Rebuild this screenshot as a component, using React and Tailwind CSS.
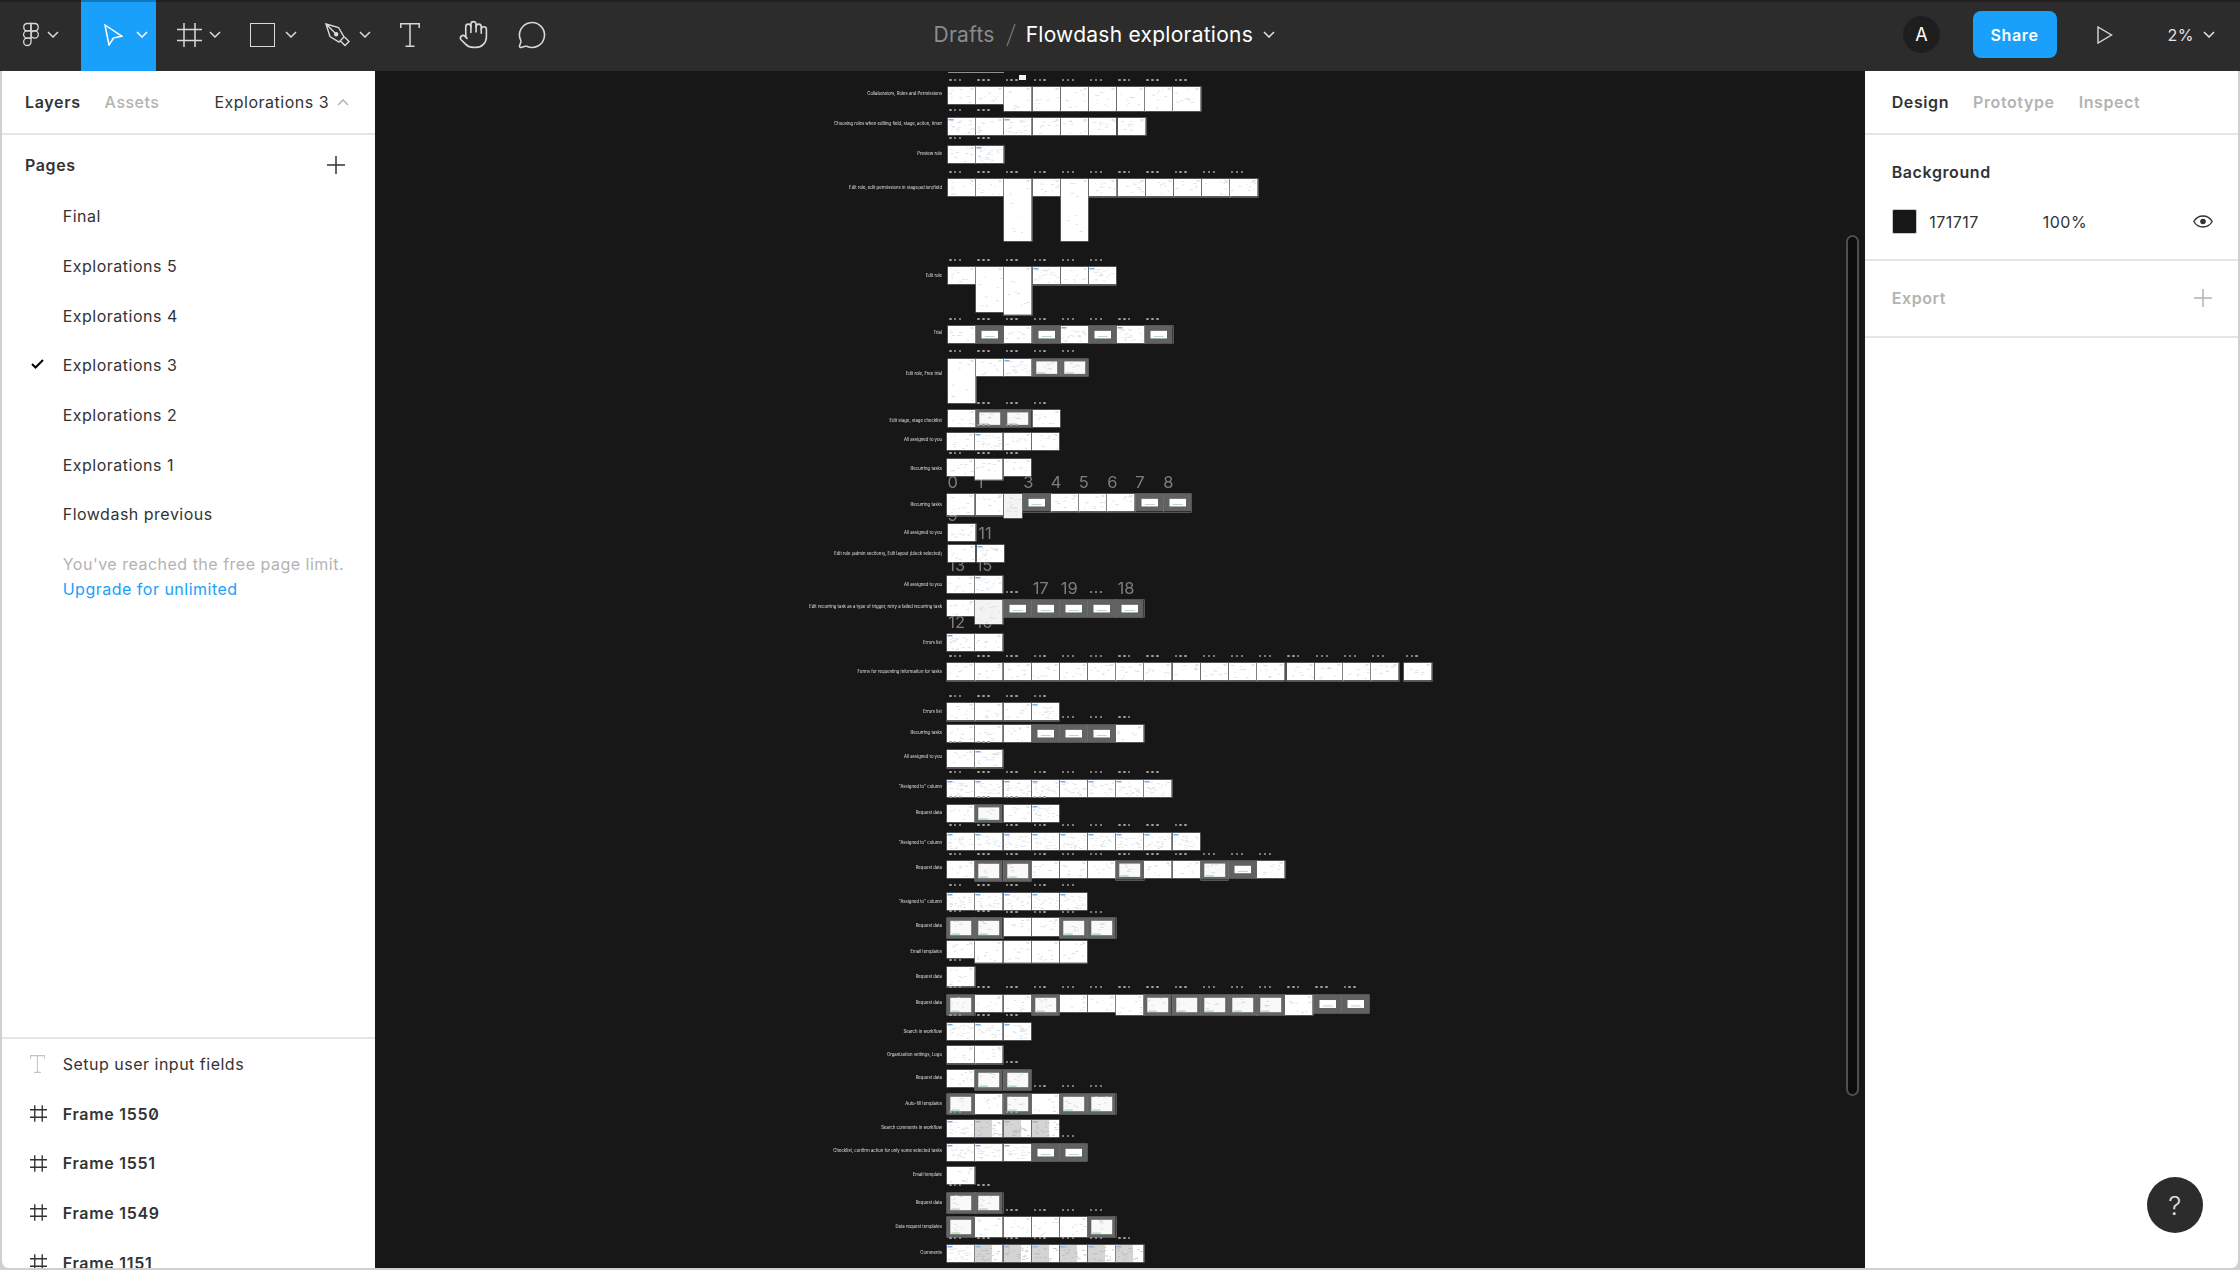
import React from 'react';
import { Hand, MessageCircle } from 'lucide-react';

const OX = 375;
const OY = 71;
const col = (i, dx = 0) => 948 + 28.17 * i + dx;
const range = (a, b) => Array.from({ length: b - a + 1 }, (_, i) => a + i);

// canvas rows, all numbers are page coordinates
const rows = [
  { y: 71.5, f: 'ss', h: 1.5 },
  { y: 87.3, ly: 93.7, label: 'Collaborators, Roles and Permissions', f: 'wwwwwwwww', hs: [17, 17, 24, 24, 24, 24, 24, 24, 24] },
  { y: 118, ly: 124, label: 'Choosing roles when editing field, stage, action, timer', f: 'dwdwwww', xs: [948, 976, 1004, 1032.5, 1060.7, 1088.7, 1118] },
  { y: 145.7, ly: 154.3, label: 'Preview role', f: 'wd' },
  { y: 179.3, ly: 188, label: 'Edit role, edit permissions in stage/action/field', f: 'wwwwwwwwwww', hs: [17, 17, 62, 17, 62], xs: [948, 976, 1004.3, 1032.7, 1060.7, 1089.3, 1117.7, 1145.7, 1173.7, 1202, 1230.3] },
  { y: 267.3, ly: 276, label: 'Edit role', f: 'wwwdwd', hs: [17, 45, 47.7] },
  { y: 326, ly: 332.7, label: 'Trial', f: 'wgwgdgdg' },
  { y: 358.7, ly: 373.7, label: 'Edit role, Free trial', f: 'wwdGG', hs: [44.7] },
  { y: 410, ly: 421, label: 'Edit stage, stage checklist', f: 'wGGw' },
  { y: 432.7, ly: 439.7, label: 'All assigned to you', f: 'wdww', dx: -0.7 },
  { y: 459.3, ly: 468.7, label: 'Recurring tasks', f: 'www', hs: [17, 20.7, 17], dx: -0.7 },
  { y: 494.3, ly: 505, label: 'Recurring tasks', f: 'wwlgwwwgg', w2: 18, hs: [21.3, 21.3, 24], xs: [947.3, 975.7, 1003.7, 1023, 1051, 1079, 1107.3, 1135.7, 1163.7] },
  { y: 524, ly: 532.7, label: 'All assigned to you', f: 'w' },
  { y: 544.7, ly: 553.7, label: 'Edit role (admin sections), Edit layout (block selected)', f: 'wd', xs: [947.7, 976.7] },
  { y: 576, ly: 584.7, label: 'All assigned to you', f: 'wd', dx: -0.7 },
  { y: 599.7, ly: 607, label: 'Edit recurring task as a type of trigger, retry a failed recurring task', f: 'wlggggg', hs: [16.7, 24], dx: -0.7 },
  { y: 634, ly: 642.7, label: 'Errors list', f: 'dw', dx: -0.7 },
  { y: 663.3, ly: 672, label: 'Forms for requesting information for tasks', f: 'wwwwwwwwwwwwwwwww', xs: [...range(0, 11).map((i) => col(i, -0.7)), 1286.7, 1315, 1343, 1371.3, 1404.3] },
  { y: 703.3, ly: 711.7, label: 'Errors list', f: 'wwwd', dx: -0.7 },
  { y: 725, ly: 733.3, label: 'Recurring tasks', f: 'wwwgggw', dx: -0.7 },
  { y: 750.3, ly: 757.3, label: 'All assigned to you', f: 'wd', dx: -0.7 },
  { y: 779.7, ly: 787.3, label: '"Assigned to" column', f: 'dddddddd', dx: -0.7 },
  { y: 804.7, ly: 812.7, label: 'Request data', f: 'wGwd', dx: -0.7 },
  { y: 832.7, ly: 842.7, label: '"Assigned to" column', f: 'ddddddddd', dx: -0.7 },
  { y: 861, ly: 867.7, label: 'Request data', f: 'wGGwwwGwwGgw', hs: [17, 20, 20, 17, 17, 17, 18.5, 17, 17, 18.5, 17, 17], dx: -0.7 },
  { y: 893, ly: 902, label: '"Assigned to" column', f: 'ddddd', dx: -0.7 },
  { y: 918, ly: 925.7, label: 'Request data', f: 'GGwwGG', hs: [20, 20, 18.3, 18.3, 20, 20], dx: -0.7 },
  { y: 941, ly: 951.7, label: 'Email templates', f: 'wwwww', hs: [17, 21.7, 21.7, 21.7, 21.7], dx: -0.7 },
  { y: 967.3, ly: 977.3, label: 'Request data', f: 'w', h: 19.3, dx: -0.7 },
  { y: 994.7, ly: 1003.3, label: 'Request data', f: 'GwwGwwwGGGGGwgg', hs: [20, 17, 17, 20, 17, 17, 20, 20, 20, 20, 20, 20, 20, 18, 18], dx: -0.7 },
  { y: 1023, ly: 1031.7, label: 'Search in workflow', f: 'ddd', dx: -0.7 },
  { y: 1046.3, ly: 1055, label: 'Organization settings, Logo', f: 'ww', dx: -0.7 },
  { y: 1069.5, ly: 1078.3, label: 'Request data', f: 'wGG', hs: [17, 20, 20], dx: -0.7 },
  { y: 1093.7, ly: 1103.7, label: 'Auto-fill templates', f: 'GwGwGG', h: 20, dx: -0.7 },
  { y: 1120, ly: 1128.3, label: 'Search comments in workflow', f: 'dppp', dx: -0.7 },
  { y: 1143.7, ly: 1151.3, label: 'Checklist, confirm action for only some selected tasks', f: 'dddgg', dx: -0.7 },
  { y: 1166.7, ly: 1175, label: 'Email template', f: 'w', dx: -0.7 },
  { y: 1193.3, ly: 1203.3, label: 'Request data', f: 'GG', h: 20, dx: -0.7 },
  { y: 1217.3, ly: 1227.3, label: 'Data request templates', f: 'GwwwwG', h: 20, dx: -0.7 },
  { y: 1245, ly: 1253.3, label: 'Comments', f: 'dpppppp', dx: -0.7 },
];

// y, column indexes
const dotRows = [
  [80, range(0, 8)], [110.3, [0, 1]], [138.3, [0, 1]], [172, range(0, 10)], [259.7, range(0, 5)],
  [318.7, range(0, 7)], [351.3, range(0, 4)], [402.7, [1, 2, 3]], [425.3, [1, 2]], [452.7, [0, 1, 2]],
  [592.3, [2, 5]], [655.7, range(0, 11)], [696, range(0, 3)], [717, [4, 5, 6]], [742.3, [0, 1]], [772.3, range(0, 7)],
  [796.7, range(0, 3)], [825, range(0, 8)], [853.7, range(0, 11)], [885.3, range(0, 4)], [910.7, [0, 1]],
  [912, [2, 3, 4, 5]], [960, [0]], [987.3, range(0, 14)], [1015.3, [0, 1, 2]], [1062, [2]], [1086, [3, 4, 5]],
  [1112.3, [0, 2]], [1135.7, [4]], [1185.3, [0, 1]], [1209.7, [2, 3, 4, 5]], [1237.7, range(0, 6)],
];

const digits = [
  ['0', 952.7, 482], ['1', 980, 482], ['3', 1028.3, 482], ['4', 1056, 482], ['5', 1083.7, 482], ['6', 1112.3, 482],
  ['7', 1140, 482], ['8', 1168.3, 482], ['9', 952.7, 515], ['11', 985, 532.7], ['13', 956.7, 565], ['15', 984, 565],
  ['17', 1040.7, 587.7], ['19', 1069.3, 587.7], ['18', 1126, 587.7], ['12', 956.7, 622.3], ['16', 984, 622.3],
];

const pages = ['Final', 'Explorations 5', 'Explorations 4', 'Explorations 3', 'Explorations 2', 'Explorations 1', 'Flowdash previous'];

function rnd(seed) {
  let s = seed * 9301 + 49297;
  return () => {
    s = (s * 9301 + 49297) % 233280;
    return s / 233280;
  };
}

function Marks({ w, h, n, seed, color, x0 = 1, x1 }) {
  const r = rnd(seed);
  const right = x1 ?? w;
  return range(1, n).map((i) => (
    <rect key={i} x={x0 + r() * (right - x0 - 3)} y={2 + r() * (h - 4)} width={1 + r() * 2.5} height={0.6} fill={color} />
  ));
}

function Thumb({ kind, w, h, seed }) {
  if (kind === 's') return null;
  return (
    <svg width={w} height={h} className="block">
      {kind === 'w' && <>
        <rect width={w} height={h} fill="#fff" />
        <Marks w={w} h={h} n={8} seed={seed} color="#cdcdcd" />
        <rect x={w - 5} y={1.5} width={3} height={1} fill="#b8d4b8" />
      </>}
      {kind === 'l' && <>
        <rect width={w} height={h} fill="#f3f3f3" />
        <Marks w={w} h={h} n={16} seed={seed} color="#d0d0d0" />
      </>}
      {kind === 'd' && <>
        <rect width={w} height={h} fill="#fff" />
        <rect x={0.5} y={1} width={5} height={1.5} fill="#79ace8" />
        <Marks w={w} h={h} n={24} seed={seed} color="#d0d8e0" />
      </>}
      {kind === 'p' && <>
        <rect width={w} height={h} fill="#fff" />
        <rect width={w * 0.62} height={h} fill="#d4d4d4" />
        <rect x={0.5} y={1} width={5} height={1.5} fill="#8fb6e4" />
        <Marks w={w} h={h} n={20} seed={seed} color="#b0b0b0" />
      </>}
      {kind === 'g' && <>
        <rect width={w} height={h} fill="#616161" />
        <rect x={w * 0.2} y={h * 0.28} width={w * 0.6} height={h * 0.44} fill="#fff" />
        <rect x={w * 0.32} y={h * 0.58} width={w * 0.36} height={1} fill="#b8d8c0" />
      </>}
      {kind === 'G' && <>
        <rect width={w} height={h} fill="#646464" />
        <rect x={w * 0.12} y={h * 0.14} width={w * 0.76} height={h * 0.72} fill="#f9f9f9" />
        <Marks w={w - 6} h={h - 5} n={5} seed={seed} color="#c8c8c8" x0={4} />
        <rect x={w * 0.16} y={h * 0.78} width={w * 0.3} height={1} fill="#8fcf9f" />
      </>}
    </svg>
  );
}

function Dots({ x, y }) {
  return (
    <div className="absolute flex gap-[2.5px]" style={{ left: x - OX, top: y - 1.2 - OY }}>
      <i className="size-[2.4px] rounded-full bg-[#9c9c9c]" />
      <i className="size-[2.4px] rounded-full bg-[#9c9c9c]" />
      <i className="size-[2.4px] rounded-full bg-[#9c9c9c]" />
    </div>
  );
}

function Canvas() {
  return (
    <div className="absolute inset-0 blur-[0.4px]">
      {digits.map(([t, x, y], i) => (
        <span key={i} className="absolute -translate-x-1/2 -translate-y-1/2 text-[16.5px] leading-none text-[#7d7d7d]" style={{ left: x - OX, top: y - OY }}>{t}</span>
      ))}
      {rows.map((row, ri) => (
        <React.Fragment key={ri}>
          {row.label && (
            <span className="absolute -translate-x-full -translate-y-1/2 whitespace-nowrap text-[4.25px] leading-none text-[#e0e0e0]" style={{ left: 942 - OX, top: row.ly - OY }}>{row.label}</span>
          )}
          {row.f.split('').map((kind, i) => {
            const x = row.xs ? (row.xs[i] ?? col(i)) : col(i, row.dx || 0);
            const h = row.hs?.[i] ?? row.h ?? 17.3;
            const w = row.w2 && i === 2 ? row.w2 : 27.5;
            return (
              <div key={i} className={kind === 's' ? 'absolute bg-[#8f8f8f]' : 'absolute overflow-hidden shadow-[0_0_0_0.6px_#7d7d7d]'} style={{ left: x - OX, top: row.y - OY, width: w, height: h }}>
                <Thumb kind={kind} w={w} h={h} seed={ri * 31 + i * 7 + 1} />
              </div>
            );
          })}
        </React.Fragment>
      ))}
      <div className="absolute left-[644px] top-[4px] h-[5px] w-[7px] bg-[#eef4ee]" />
      {dotRows.map(([y, cols], ri) => cols.map((c) => <Dots key={`${ri}-${c}`} x={col(c) + 1.2} y={y} />))}
      {[1287.3, 1316, 1344, 1372, 1405.7].map((x) => <Dots key={x} x={x} y={655.7} />)}
    </div>
  );
}

const Chevron = ({ up, className = 'text-[#d6d6d6]' }) => (
  <svg width="12" height="7" viewBox="0 0 12 7" fill="none" stroke="currentColor" strokeWidth="1.5" className={className}>
    <path d={up ? 'M1 6l5-5 5 5' : 'M1 1l5 5 5-5'} />
  </svg>
);

const FrameIcon = ({ w = 25, h = 24, strokeWidth = 1.5 }) => (
  <svg width={w} height={h} viewBox="0 0 25 24" fill="none" stroke="currentColor" strokeWidth={strokeWidth}>
    <path d="M7 0v24M18 0v24M0 6.5h25M0 17.5h25" />
  </svg>
);

const TextIcon = ({ w = 20, h = 24 }) => (
  <svg width={w} height={h} viewBox="0 0 20 24" fill="none" stroke="currentColor" strokeWidth="1.5">
    <path d="M.8 5V.8h18.4V5M10 .8v22.4M5.5 23.2h9" />
  </svg>
);

const Plus = ({ className }) => (
  <svg width="18" height="18" viewBox="0 0 18 18" fill="none" stroke="currentColor" strokeWidth="1.5" className={className}>
    <path d="M9 0v18M0 9h18" />
  </svg>
);

function Toolbar() {
  return (
    <header className="relative flex h-[71px] shrink-0 bg-[#2c2c2c] text-[#d9d9d9]">
      <div className="flex h-full w-[81px] shrink-0 items-center pb-[2px] pl-[22px]">
        <svg width="18" height="25" viewBox="0 0 18 24" fill="none" stroke="currentColor" strokeWidth="1.3">
          <path d="M9 1H5.25a3.67 3.67 0 0 0 0 7.33H9z" />
          <path d="M9 1h3.75a3.67 3.67 0 0 1 0 7.33H9z" />
          <path d="M9 8.33H5.25a3.67 3.67 0 0 0 0 7.34H9z" />
          <circle cx="12.67" cy="12" r="3.67" />
          <path d="M9 15.67H5.25A3.67 3.67 0 1 0 9 19.33z" />
        </svg>
        <Chevron className="ml-[7px]" />
      </div>
      <div className="flex h-full w-[75px] shrink-0 items-center bg-[#18a0fb] pb-[2px] pl-[23px] text-white">
        <svg width="19" height="22" viewBox="0 0 19 22" fill="none" stroke="currentColor" strokeWidth="1.5">
          <path d="M1 1l17 11.3-8.5 1.7L5 21z" />
        </svg>
        <Chevron className="ml-[13px] text-white" />
      </div>
      <div className="flex h-full w-[77px] shrink-0 items-center pb-[2px] pl-[21px]">
        <FrameIcon />
        <Chevron className="ml-[7px]" />
      </div>
      <div className="flex h-full w-[73px] shrink-0 items-center pb-[2px] pl-[17px]">
        <div className="h-[24px] w-[25px] border-[1.5px] border-[#d9d9d9]" />
        <Chevron className="ml-[10px]" />
      </div>
      <div className="flex h-full w-[79px] shrink-0 items-center pb-[2px] pl-[19px]">
        <svg width="25" height="24" viewBox="0 0 25 24" fill="none" stroke="currentColor" strokeWidth="1.4">
          <path d="M1 1l12.5 3.5L19 14l-5 5-9-5.5zM1 1l9.3 9.3" />
          <circle cx="11.2" cy="11.2" r="1.5" fill="currentColor" />
          <path d="M15.5 18l4.5 4.5 4-4-4.5-4.5" />
        </svg>
        <Chevron className="ml-[9px]" />
      </div>
      <div className="flex h-full w-[56px] shrink-0 items-center pb-[2px] pl-[15px]"><TextIcon /></div>
      <div className="flex h-full w-[62px] shrink-0 items-center pb-[2px] pl-[17px]"><Hand size={31} strokeWidth={1.25} /></div>
      <div className="flex h-full w-[71px] shrink-0 items-center pb-[2px] pl-[14px]"><MessageCircle size={30} strokeWidth={1.25} /></div>
      <div className="flex h-full flex-1 items-center pb-[2px] pl-[359.5px] text-[21px] leading-none tracking-[0.25px]">
        <span className="text-[#8b8b8b]">Drafts</span>
        <svg width="10" height="24" viewBox="0 0 10 24" className="ml-[11px] text-[#777]" stroke="currentColor" fill="none" strokeWidth="1.2"><path d="M9 1L1 23" /></svg>
        <span className="ml-[10px] text-white">Flowdash explorations</span>
        <Chevron className="ml-[10px] text-[#e5e5e5]" />
      </div>
      <div className="flex h-full shrink-0 items-center pb-[2px]">
        <div className="flex size-[37px] shrink-0 items-center justify-center rounded-full bg-[#1e1e1e] text-[18px] text-white">A</div>
        <div className="ml-[32.5px] flex h-[47px] w-[84px] shrink-0 items-center justify-center rounded-[8px] bg-[#18a0fb] text-[16px] font-semibold tracking-[0.6px] text-white">Share</div>
        <svg width="16" height="18" viewBox="0 0 16 18" fill="none" stroke="currentColor" strokeWidth="1.4" className="ml-[40px] shrink-0"><path d="M1 1l13.5 8L1 17z" /></svg>
        <span className="ml-[55px] text-[16px] leading-none tracking-[0.5px] text-[#e5e5e5]">2%</span>
        <Chevron className="ml-[9px] mr-[25px] text-[#e5e5e5]" />
      </div>
      <div className="absolute inset-x-0 top-0 h-[2px] bg-black/25" />
    </header>
  );
}

function LeftPanel() {
  return (
    <aside className="flex w-[375px] shrink-0 flex-col rounded-bl-[8px] border-l-2 border-[#d0d0d0] bg-white text-[16px] tracking-[0.5px] text-[#333]">
      <div className="flex h-[64px] shrink-0 items-center border-b-2 border-[#e5e5e5] pl-[23px]">
        <span className="font-semibold tracking-[0.65px]">Layers</span>
        <span className="ml-[24px] font-medium text-[#b3b3b3]">Assets</span>
        <span className="ml-[55px]">Explorations 3</span>
        <Chevron up className="ml-[8px] text-[#b3b3b3]" />
      </div>
      <div className="flex h-[56.3px] shrink-0 items-center justify-between pl-[23px] pr-[30px] pt-[4px]">
        <span className="font-semibold tracking-[0.6px]">Pages</span>
        <Plus />
      </div>
      {pages.map((p) => (
        <div key={p} className="relative flex h-[49.7px] shrink-0 items-center pl-[60.7px]">
          {p === 'Explorations 3' && (
            <svg width="13" height="10" viewBox="0 0 13 10" fill="none" stroke="#000" strokeWidth="2" className="absolute left-[29px] top-[19px]"><path d="M1 5l3.5 3.5L12 1" /></svg>
          )}
          {p}
        </div>
      ))}
      <div className="mt-[13.3px] pl-[60.7px] leading-[24.7px]">
        <div className="text-[#b3b3b3]">You've reached the free page limit.</div>
        <div className="text-[#18a0fb]">Upgrade for unlimited</div>
      </div>
      <div className="mt-auto h-[231px] shrink-0 overflow-hidden border-t-2 border-[#e5e5e5]">
        <div className="flex h-[49.7px] items-center">
          <div className="flex w-[60.7px] justify-center pl-[10px] text-[#c4c4c4]"><TextIcon w={15} h={18} /></div>
          Setup user input fields
        </div>
        {['Frame 1550', 'Frame 1551', 'Frame 1549', 'Frame 1151'].map((f) => (
          <div key={f} className="flex h-[49.7px] items-center font-semibold tracking-[0.7px] [font-feature-settings:'zero']">
            <div className="flex w-[60.7px] justify-center pl-[12px]"><FrameIcon w={17} h={17} strokeWidth={2} /></div>
            {f}
          </div>
        ))}
      </div>
    </aside>
  );
}

function RightPanel() {
  return (
    <aside className="relative flex w-[375px] shrink-0 flex-col rounded-br-[8px] border-r-2 border-[#d0d0d0] bg-white text-[16px] tracking-[0.5px] text-[#333]">
      <div className="flex h-[64px] shrink-0 items-center gap-[24px] border-b-2 border-[#e5e5e5] pl-[26.7px] font-semibold tracking-[0.6px]">
        <span>Design</span>
        <span className="text-[#b3b3b3]">Prototype</span>
        <span className="text-[#b3b3b3]">Inspect</span>
      </div>
      <div className="h-[125.5px] shrink-0 border-b-2 border-[#e5e5e5] pl-[26.7px] pr-[25.5px] pt-[24px]">
        <div className="font-semibold leading-[26px] tracking-[0.6px]">Background</div>
        <div className="mt-[24px] flex items-center">
          <div className="size-[25px] rounded-[2px] border border-[#c8c8c8] bg-[#171717]" />
          <span className="ml-[12.5px] w-[113.5px]">171717</span>
          <span>100%</span>
          <svg width="20" height="13" viewBox="0 0 20 13" fill="none" stroke="#333" strokeWidth="1.4" className="ml-auto"><path d="M.8 6.5C3 2.8 6.2 1 10 1s7 1.8 9.2 5.5C17 10.2 13.8 12 10 12S3 10.2.8 6.5z" /><circle cx="10" cy="6.5" r="2.8" fill="#333" stroke="none" /></svg>
        </div>
      </div>
      <div className="flex h-[77px] shrink-0 items-center justify-between border-b-2 border-[#e5e5e5] pl-[26.7px] pr-[26.5px] font-semibold tracking-[0.6px] text-[#b3b3b3]">
        <span>Export</span>
        <Plus className="text-[#b3b3b3]" />
      </div>
      <div className="absolute bottom-[35px] right-[35px] flex size-[56px] items-center justify-center rounded-full bg-[#2c2c2c] text-[26px] font-light text-[#e0e0e0]">?</div>
    </aside>
  );
}

export default function App() {
  return (
    <div className="flex h-[1270px] w-[2240px] flex-col overflow-hidden bg-[#d0d0d0] font-[Inter,sans-serif]">
      <Toolbar />
      <div className="flex min-h-0 flex-1 pb-[2px]">
        <LeftPanel />
        <main className="relative flex-1 overflow-hidden bg-[#171717]">
          <Canvas />
          <div className="absolute right-[6px] top-[164px] h-[861px] w-[13px] rounded-full border-2 border-[#4e4e4e] bg-[#0c0c0c]" />
        </main>
        <RightPanel />
      </div>
    </div>
  );
}
